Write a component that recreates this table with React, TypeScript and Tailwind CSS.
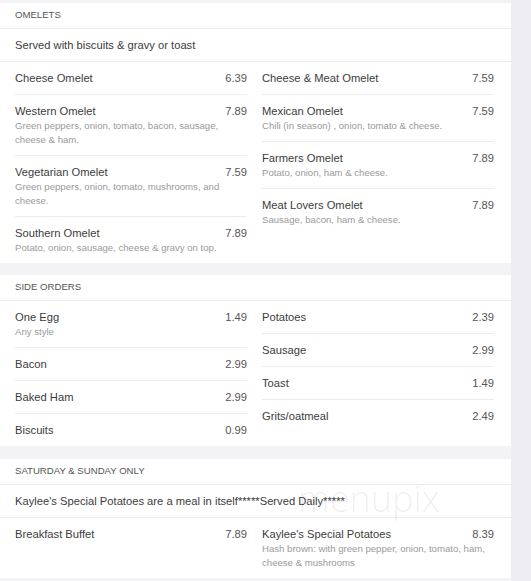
import React from 'react';

type Item = { name: string; price: string; desc?: string };

type Section = {
  title: string;
  note?: string;
  left: Item[];
  right: Item[];
};

const sections: Section[] = [
  {
    title: 'Omelets',
    note: 'Served with biscuits & gravy or toast',
    left: [
      { name: 'Cheese Omelet', price: '6.39' },
      { name: 'Western Omelet', price: '7.89', desc: 'Green peppers, onion, tomato, bacon, sausage, cheese & ham.' },
      { name: 'Vegetarian Omelet', price: '7.59', desc: 'Green peppers, onion, tomato, mushrooms, and cheese.' },
      { name: 'Southern Omelet', price: '7.89', desc: 'Potato, onion, sausage, cheese & gravy on top.' },
    ],
    right: [
      { name: 'Cheese & Meat Omelet', price: '7.59' },
      { name: 'Mexican Omelet', price: '7.59', desc: 'Chili (in season) , onion, tomato & cheese.' },
      { name: 'Farmers Omelet', price: '7.89', desc: 'Potato, onion, ham & cheese.' },
      { name: 'Meat Lovers Omelet', price: '7.89', desc: 'Sausage, bacon, ham & cheese.' },
    ],
  },
  {
    title: 'Side Orders',
    left: [
      { name: 'One Egg', price: '1.49', desc: 'Any style' },
      { name: 'Bacon', price: '2.99' },
      { name: 'Baked Ham', price: '2.99' },
      { name: 'Biscuits', price: '0.99' },
    ],
    right: [
      { name: 'Potatoes', price: '2.39' },
      { name: 'Sausage', price: '2.99' },
      { name: 'Toast', price: '1.49' },
      { name: 'Grits/oatmeal', price: '2.49' },
    ],
  },
  {
    title: 'Saturday & Sunday Only',
    note: "Kaylee's Special Potatoes are a meal in itself*****Served Daily*****",
    left: [{ name: 'Breakfast Buffet', price: '7.89' }],
    right: [
      { name: "Kaylee's Special Potatoes", price: '8.39', desc: 'Hash brown: with green pepper, onion, tomato, ham, cheese & mushrooms' },
    ],
  },
];

function MenuItem({ item }: { item: Item }) {
  return (
    <div className="py-[8px] border-b border-[#ececec] last:border-b-0">
      <div className="flex justify-between text-[11.2px] leading-[16px]">
        <span className="text-[#3c3c3c]">{item.name}</span>
        <span className="text-[#555]">{item.price}</span>
      </div>
      {item.desc && <p className="text-[9.6px] leading-[14px] text-[#9a9a9a] pr-[2px]">{item.desc}</p>}
    </div>
  );
}

function MenuSection({ section }: { section: Section }) {
  return (
    <section className="bg-white">
      <div className="h-[25px] px-[15px] flex items-center text-[9.6px] uppercase text-[#555] border-b border-[#ececec] box-content">
        {section.title}
      </div>
      {section.note && (
        <div className="h-[32px] px-[15px] flex items-center text-[11.2px] text-[#3c3c3c] border-b border-[#ececec] box-content whitespace-nowrap">
          {section.note}
        </div>
      )}
      <div className="grid grid-cols-2 gap-x-[15px] pl-[15px] pr-[17px]">
        <div className="flex flex-col">
          {section.left.map((item) => (
            <MenuItem key={item.name} item={item} />
          ))}
        </div>
        <div className="flex flex-col">
          {section.right.map((item) => (
            <MenuItem key={item.name} item={item} />
          ))}
        </div>
      </div>
    </section>
  );
}

export default function App() {
  return (
    <div className="w-[531px] h-[581px] overflow-hidden bg-[#ededf2] font-['Liberation_Sans',Arial,sans-serif]">
      <div className="relative w-[511px] h-full pt-[3px] flex flex-col bg-[#f3f3f5]">
        <MenuSection section={sections[0]} />
        <div className="mt-[12px]">
          <MenuSection section={sections[1]} />
        </div>
        <div className="mt-[13px]">
          <MenuSection section={sections[2]} />
        </div>
        {/* watermark */}
        <span className="absolute left-[298px] top-[481px] text-[36px] leading-none font-light text-black/[0.07] font-['Open_Sans',sans-serif] pointer-events-none">
          menupix
        </span>
      </div>
    </div>
  );
}
